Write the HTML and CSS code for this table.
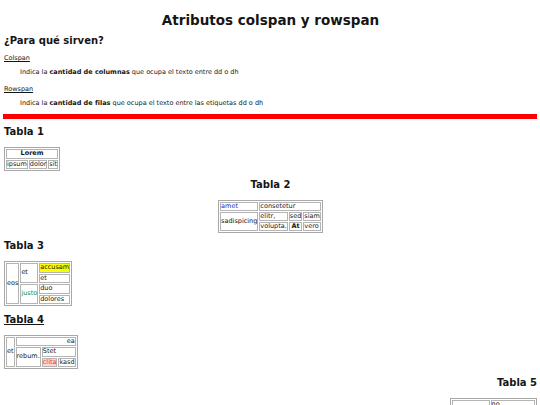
FILE: index.html
```html
<!DOCTYPE html>
<html lang="es">
<head>
<meta charset="utf-8">
<title>Atributos colspan y rowspan</title>
<link rel="stylesheet" href="styles.css">
</head>
<body>
<h1 class="title">Atributos colspan y rowspan</h1>
<h2 class="subtitle">¿Para qué sirven?</h2>
<dl class="defs">
  <dt>Colspan</dt>
  <dd>Indica la <b>cantidad de columnas</b> que ocupa el texto entre dd o dh</dd>
  <dt>Rowspan</dt>
  <dd>Indica la <b>cantidad de filas</b> que ocupa el texto entre las etiquetas dd o dh</dd>
</dl>
<div class="rule"></div>

<section class="block">
  <h3 class="caption">Tabla 1</h3>
  <table class="grid">
    <tr><th colspan="3">Lorem</th></tr>
    <tr><td>ipsum</td><td>dolor</td><td>sit</td></tr>
  </table>
</section>

<section class="block center">
  <h3 class="caption">Tabla 2</h3>
  <table class="grid compact">
    <tr><td class="blue">amet</td><td colspan="3">consetetur</td></tr>
    <tr><td rowspan="2">sadispicing</td><td>elitr,</td><td>sed</td><td>siam</td></tr>
    <tr><td>volupta.</td><th>At</th><td>vero</td></tr>
  </table>
</section>

<section class="block">
  <h3 class="caption">Tabla 3</h3>
  <table class="grid">
    <tr><td rowspan="4">eos</td><td rowspan="2">et</td><td class="yellow">accusam</td></tr>
    <tr><td>et</td></tr>
    <tr><td rowspan="2" class="green">justo</td><td>duo</td></tr>
    <tr><td>dolores</td></tr>
  </table>
</section>

<section class="block">
  <h3 class="caption underline">Tabla 4</h3>
  <table class="grid">
    <tr><td rowspan="3">et</td><td colspan="3" class="right">ea</td></tr>
    <tr><td rowspan="2">rebum.</td><td colspan="2">Stet</td></tr>
    <tr><td class="pink">clita</td><td>kasd</td></tr>
  </table>
</section>

<section class="block end">
  <h3 class="caption">Tabla 5</h3>
  <table class="grid">
    <tr><td rowspan="3">gubergren,</td><td>no</td></tr>
    <tr><td>sea takimata</td></tr>
    <tr><td>sanctus est</td></tr>
  </table>
</section>
</body>
</html>
```

FILE: styles.css
```css
html, body {
  margin: 0;
  padding: 0;
  background: #fff;
}

body {
  padding: 12px 3px 0 4px;
  font-family: "DejaVu Sans", Verdana, sans-serif;
  color: #151515;
}

.title {
  margin: 0;
  font-size: 13.5px;
  line-height: 16px;
  text-align: center;
  font-weight: bold;
}

.subtitle {
  margin: 7px 0 0;
  font-size: 10px;
  line-height: 12px;
  font-weight: bold;
}

.defs {
  margin: 7px 0 0;
  font-size: 6.5px;
  line-height: 8px;
}

.defs dt {
  text-decoration: underline;
  margin: 0;
}

.defs dd {
  margin: 5.5px 0 9.5px 16px;
}

.defs dd:last-child {
  margin-bottom: 0;
}

.rule {
  height: 5px;
  margin: 7px 0 0 -1px;
  background: #f00;
}

.block {
  margin-top: 7.5px;
}

.caption {
  margin: 0 0 9px;
  font-size: 10px;
  line-height: 12px;
  font-weight: bold;
}

.center .caption { text-align: center; }
.center .grid { margin: 0 auto; }

.end .caption { text-align: right; }
.end .grid { margin-left: auto; }

.underline { text-decoration: underline; }

.grid {
  border-collapse: separate;
  border-spacing: 1px;
  border: 1px solid #a8a8a8;
  font-size: 6.5px;
  line-height: 7.5px;
}

.grid.compact { line-height: 7px; }

.grid td, .grid th {
  border: 1px solid #b4b4b4;
  padding: 0;
  text-align: left;
  font-weight: normal;
  vertical-align: middle;
}

.grid th { font-weight: bold; text-align: center; }

.grid .right { text-align: right; }
.blue { color: #2525d0; }
.green { color: #2a8a2a; }
.yellow { background: #ffff00; }
.pink { background: #ffd6d6; color: #f03030; }
```
